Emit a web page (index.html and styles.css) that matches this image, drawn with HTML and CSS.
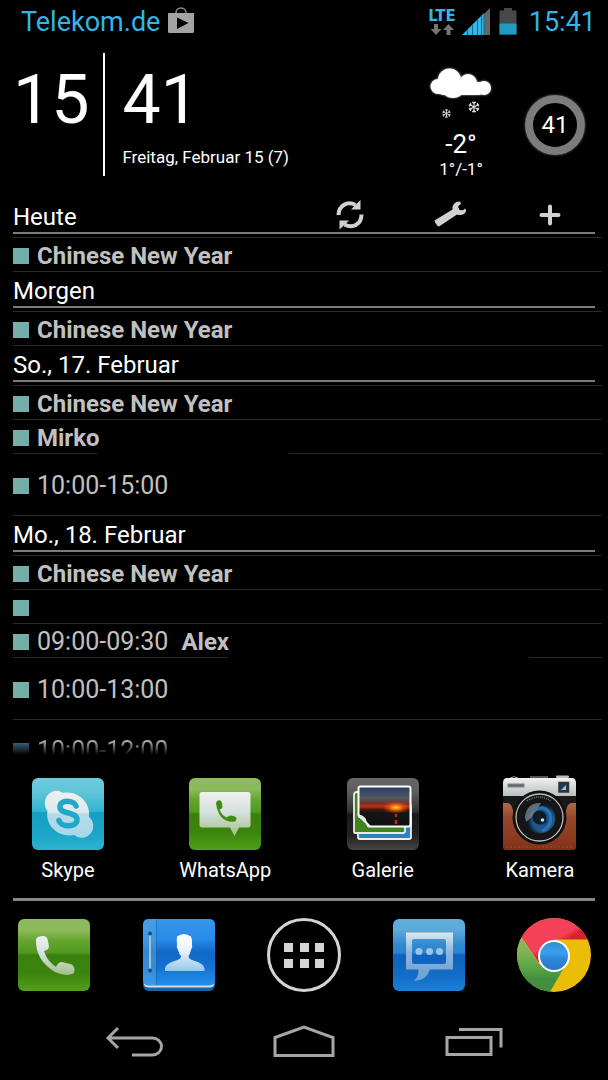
FILE: index.html
```html
<!DOCTYPE html>
<html lang="de">
<head>
<meta charset="utf-8">
<meta name="viewport" content="width=device-width, initial-scale=1">
<title>Startbildschirm</title>
<link rel="stylesheet" href="styles.css">
</head>
<body>
<header class="status">
  <span class="carrier">Telekom.de</span>
  <svg class="store" width="26" height="27" viewBox="0 0 26 27" aria-hidden="true">
    <path d="M8 7V5.500a5 4.500 0 0 1 10 0V7" fill="none" stroke="#8c8c8c" stroke-width="1.500"/>
    <path d="M0 6h26v18.500a1.500 1.500 0 0 1-1.500 1.500h-23A1.500 1.500 0 0 1 0 24.500z" fill="#a3a3a3"/>
    <path d="M9 10.500l11.500 5.500L9 22z" fill="#000"/>
  </svg>
  <span class="network">
    <span class="lte">LTE</span>
    <svg width="24" height="11" viewBox="0 0 24 11" fill="#757575" aria-hidden="true">
      <path d="M4 0h4v5h3.500L6 11 .5 5H4zM16.500 11h4V6H24L18.500 0 13 6h3.500z"/>
    </svg>
  </span>
  <svg class="signal" width="28" height="28" viewBox="0 0 28 28" aria-hidden="true">
    <path d="M22 6L28 0v27h-6z" fill="#666"/>
    <path d="M0 27L22 5v22z" fill="#33b5e5"/>
    <path d="M5.500 22v5M10.500 17v10M15.500 12v15M19.500 8v19M22 5v22" stroke="#17698a" stroke-width="1"/>
  </svg>
  <svg class="battery" width="18" height="27" viewBox="0 0 18 27" aria-hidden="true">
    <path d="M5 0h8v2.500h4.500V26.500H.5V2.500H5z" fill="#484848"/>
    <path d="M.5 15.500h17v11H.5z" fill="#2199c2"/>
  </svg>
  <time class="status-time">15:41</time>
</header>

<main>
<section class="clock" aria-label="Uhr und Wetter">
  <div class="big hours">15</div>
  <div class="minutes">
    <div class="big">41</div>
    <div class="date">Freitag, Februar 15 (7)</div>
  </div>
  <div class="weather">
    <svg width="66" height="58" viewBox="0 0 66 58" aria-hidden="true">
      <defs>
        <filter id="glow" x="-20%" y="-20%" width="140%" height="140%"><feGaussianBlur stdDeviation="1"/></filter>
        <g id="cloud"><circle cx="21.500" cy="15" r="11.500"/><circle cx="40" cy="18" r="9"/><circle cx="10" cy="21.500" r="7.500"/><circle cx="56" cy="23" r="7"/><rect x="10" y="17" width="46" height="13" rx="5"/><ellipse cx="25" cy="26" rx="10" ry="7"/></g>
        <path id="flake" d="M0-5.500V5.500M-4.800-2.800L4.800 2.800M-4.800 2.800L4.800-2.800M-1.800-5L0-3.500 1.800-5M-1.800 5L0 3.500 1.800 5M-5.200-1L-3-1.700-3.600-4M5.200 1L3 1.700 3.600 4M-5.200 1L-3 1.700-3.600 4M5.200-1L3-1.700 3.600-4" fill="none" stroke="#ddd" stroke-width="1.200"/>
      </defs>
      <use href="#cloud" fill="#aaa" filter="url(#glow)"/>
      <use href="#cloud" fill="#fff"/>
      <use href="#flake" transform="translate(18.500 48.500) scale(.78)"/>
      <use href="#flake" transform="translate(46 42)"/>
    </svg>
    <div class="temp">-2°</div>
    <div class="range">1°/-1°</div>
  </div>
  <div class="ring">41</div>
</section>

<section class="agenda" aria-label="Termine">
  <div class="day">
    <div class="day-head">
      <h2>Heute</h2>
      <div class="tools">
        <button type="button" aria-label="Aktualisieren">
          <svg width="30" height="32" viewBox="0 0 30 32" fill="none" stroke="#d0d3cd" stroke-width="4" aria-hidden="true">
            <path d="M3.500 16C3.500 7 12 1.500 20.500 6"/><path d="M26.500 15.500C26.500 25 18 30 9.500 25.500"/>
            <path d="M25.500 1v9.500h-9.500zM4.500 30.500V21.500h9.500z" fill="#d0d3cd" stroke="none"/>
          </svg>
        </button>
        <button type="button" aria-label="Einstellungen">
          <svg width="34" height="30" viewBox="0 0 34 30" aria-hidden="true">
            <path d="M1.500 20.500L19.500 9.500C19 5 22 1.500 27 1.500l1 2.300-3 2.700 1.500 3.500 3.500.2 2-1.700 1.300 2C32 14.500 28 16 24 14.500L6 26.500C4 26 2 23 1.500 20.500z" fill="#d0d3cd"/>
          </svg>
        </button>
        <button type="button" aria-label="Hinzufügen">
          <svg width="24" height="24" viewBox="0 0 24 24" stroke="#d0d3cd" stroke-width="4" stroke-linecap="round" aria-hidden="true"><path d="M12 3.500v17M3.500 12h17"/></svg>
        </button>
      </div>
    </div>
    <ul><li><i class="dot"></i><b>Chinese New Year</b></li></ul>
  </div>
  <div class="day">
    <div class="day-head"><h2>Morgen</h2></div>
    <ul><li><i class="dot"></i><b>Chinese New Year</b></li></ul>
  </div>
  <div class="day">
    <div class="day-head"><h2>So., 17. Februar</h2></div>
    <ul>
      <li><i class="dot"></i><b>Chinese New Year</b></li>
      <li class="gap-early"><i class="dot"></i><b>Mirko</b></li>
      <li class="tall"><i class="dot"></i><span class="when">10:00-15:00</span></li>
    </ul>
  </div>
  <div class="day">
    <div class="day-head"><h2>Mo., 18. Februar</h2></div>
    <ul>
      <li><i class="dot"></i><b>Chinese New Year</b></li>
      <li><i class="dot"></i></li>
      <li class="gap-late"><i class="dot"></i><span class="when">09:00-09:30</span><b class="after-time">Alex</b></li>
      <li class="tall"><i class="dot"></i><span class="when">10:00-13:00</span></li>
      <li class="fading"><i class="dot blue"></i><span class="when">10:00-12:00</span></li>
    </ul>
  </div>
</section>

<nav class="apps" aria-label="Apps">
  <a href="#skype">
    <svg width="74" height="76" viewBox="-1 -3 74 76" aria-hidden="true">
      <defs>
        <linearGradient id="sky" x2="0" y2="1"><stop stop-color="#6bcbdc"/><stop offset=".18" stop-color="#64c5d8"/><stop offset=".47" stop-color="#30b4d0"/><stop offset=".48" stop-color="#169fc2"/><stop offset=".78" stop-color="#1aa6c8"/><stop offset="1" stop-color="#2cb4d0"/></linearGradient>
        <linearGradient id="skyw" x2="0" y2="1"><stop stop-color="#eef0f0"/><stop offset=".45" stop-color="#dce9ed"/><stop offset=".5" stop-color="#b4dbe9"/><stop offset="1" stop-color="#a9d7e8"/></linearGradient>
      </defs>
      <rect width="72" height="72" rx="6" fill="url(#sky)"/>
      <path d="M13 24A11.500 11.500 0 0 1 31 15C45 12 59 24 57 39A11.500 11.500 0 0 1 42 57C27 60 13 48 15.500 33A11 11 0 0 1 13 24z" fill="url(#skyw)"/>
      <path d="M44 28C42 22 28 21 28 29C28 37 45 33 45 41.500C45 50 29 49.500 27 42.500" fill="none" stroke="#20a7c9" stroke-width="5.500" stroke-linecap="round"/>
    </svg>
    <span>Skype</span>
  </a>
  <a href="#whatsapp">
    <svg width="74" height="76" viewBox="-1 -3 74 76" aria-hidden="true">
      <defs>
        <linearGradient id="grn" x2="0" y2="1"><stop stop-color="#8fbb5d"/><stop offset=".16" stop-color="#8cb95a"/><stop offset=".3" stop-color="#65a52f"/><stop offset=".47" stop-color="#51991d"/><stop offset=".5" stop-color="#3a800e"/><stop offset=".75" stop-color="#3b840e"/><stop offset="1" stop-color="#51a11a"/></linearGradient>
        <linearGradient id="grnw" x2="0" y2="1"><stop stop-color="#eef1ec"/><stop offset=".45" stop-color="#d5e0e0"/><stop offset="1" stop-color="#a5bf8a"/></linearGradient>
      </defs>
      <rect width="72" height="72" rx="6" fill="url(#grn)"/>
      <path d="M13 14h46q2.500 0 2.500 2.500v30.500q0 2.500-2.500 2.500H50L45.500 58 41 49.500H13q-2.500 0-2.500-2.500V16.500Q10.500 14 13 14z" fill="url(#grnw)"/>
      <path d="M28 23q4-2 5 2l.5 4q-.5 2-3 2.500 2 6 7.500 8 2-2.500 4-2l4 1q3 2 0 5-16 2-19-18z" fill="#3e8c12"/>
    </svg>
    <span>WhatsApp</span>
  </a>
  <a href="#galerie">
    <svg width="74" height="76" viewBox="-1 -3 74 76" aria-hidden="true">
      <defs>
        <linearGradient id="blk" x2="0" y2="1"><stop stop-color="#686868"/><stop offset=".2" stop-color="#5c5c5c"/><stop offset=".47" stop-color="#333"/><stop offset=".5" stop-color="#191919"/><stop offset=".8" stop-color="#222"/><stop offset="1" stop-color="#454545"/></linearGradient>
        <linearGradient id="dusk" x2="0" y2="1"><stop stop-color="#253e67"/><stop offset=".3" stop-color="#56565d"/><stop offset=".42" stop-color="#6c3430"/><stop offset=".5" stop-color="#c92c0c"/><stop offset=".57" stop-color="#491a10"/><stop offset=".65" stop-color="#161414"/><stop offset="1" stop-color="#111"/></linearGradient>
        <radialGradient id="sun"><stop stop-color="#ffe23c"/><stop offset=".25" stop-color="#ff8a18"/><stop offset="1" stop-color="#ee3300" stop-opacity="0"/></radialGradient>
      </defs>
      <rect width="72" height="72" rx="6" fill="url(#blk)"/>
      <rect x="11" y="26" width="53" height="35" rx="2" fill="#2f83bc" stroke="#eee" stroke-width="1.800"/>
      <path d="M10 14h48v39q0 2-2 2H8q-1 0-1-2V17q0-3 3-3z" fill="#40841f" stroke="#e8eee2" stroke-width="1.800"/>
      <path d="M13.500 8.500h48q2 0 2 2v36q0 2-2 2H23L11.500 37V10.500q0-2 2-2z" fill="url(#dusk)" stroke="#fff" stroke-width="2"/>
      <ellipse cx="49" cy="29.500" rx="14" ry="6.500" fill="url(#sun)"/>
      <path d="M49 36v3M49 42v4" stroke="#c22a12" stroke-width="2.500"/>
      <path d="M11.500 37q7 1 7.500 6.500 1 2.500 4 5l-2 .5Q19 42 11.500 39z" fill="#e4e4e4" stroke="#fff"/>
    </svg>
    <span>Galerie</span>
  </a>
  <a href="#kamera">
    <svg width="74" height="76" viewBox="0 -3 74 76" aria-hidden="true">
      <defs>
        <linearGradient id="met" x2="0" y2="1"><stop stop-color="#f0f1f0"/><stop offset="1" stop-color="#b9bfc0"/></linearGradient>
        <linearGradient id="lea" x2="0" y2="1"><stop stop-color="#b06a4c"/><stop offset=".3" stop-color="#98482a"/><stop offset="1" stop-color="#813216"/></linearGradient>
        <radialGradient id="lens" cx=".62" cy=".6"><stop stop-color="#061325"/><stop offset=".3" stop-color="#18538f"/><stop offset=".65" stop-color="#22598f"/><stop offset="1" stop-color="#10161d"/></radialGradient>
      </defs>
      <path d="M7 0q4-2.500 8 0M27-1h18" fill="none" stroke="#aaa"/><rect x="53" y="-2.500" width="13" height="2.500" rx="1" fill="#bbb"/>
      <rect width="73" height="72" rx="4" fill="#181818"/>
      <path d="M0 25h5q4 1 5 8 5 30 26.500 32T63 33q1-7 5-8h5v44q0 3-3 3H3q-3 0-3-3z" fill="url(#lea)"/>
      <path d="M3 0h67q3 1 3 5v13H0V5Q0 1 3 0z" fill="url(#met)"/>
      <rect x="5" y="6" width="16" height="3" fill="#666" stroke="#888"/>
      <rect x="56" y="4.500" width="9.500" height="9.500" fill="#203850" stroke="#333" stroke-width="1.500"/><path d="M58 12l5-5v5z" fill="#9dc2dc"/>
      <circle cx="36.500" cy="39.500" r="27" fill="#101010"/>
      <circle cx="36.500" cy="39.500" r="23.500" fill="#151515" stroke="#bbb" stroke-width="1.300"/>
      <path d="M24 23q12-8 24 0" fill="none" stroke="#777" stroke-width="1.500" stroke-dasharray="1 1"/>
      <circle cx="36.500" cy="39.500" r="16" fill="url(#lens)"/>
      <path d="M22 39Q24 24 38 25L30 38l-7 6z" fill="#9ca6ae" opacity=".6"/>
      <path d="M31 33q10-8 16 3 3 12-8 17" fill="none" stroke="#2c7cc2" stroke-width="3" opacity=".8"/>
      <circle cx="36.500" cy="39.500" r="7" fill="#111c28"/><circle cx="39.500" cy="42" r="1.800" fill="#bde4ff"/>
      <path d="M3 69h67" stroke="#c48867" stroke-dasharray="2 2" opacity=".3"/>
    </svg>
    <span>Kamera</span>
  </a>
</nav>

<nav class="dock" aria-label="Dock">
  <a href="#telefon" aria-label="Telefon">
    <svg width="74" height="74" viewBox="-1 -1 74 74" aria-hidden="true">
      <rect width="72" height="72" rx="6" fill="url(#grn)"/>
      <path d="M20 18Q28 15 29.500 20L31 27q0 4-5 5Q29 42 38 48 40 43 44 43L54 45.500Q58 49 55.500 54.500 48 58 37 53 17 41 18 20z" fill="url(#grnw)"/>
    </svg>
  </a>
  <a href="#kontakte" aria-label="Kontakte">
    <svg width="74" height="74" viewBox="-1 -1 74 74" aria-hidden="true">
      <defs>
        <linearGradient id="blu" x2="0" y2="1"><stop stop-color="#3595ea"/><stop offset=".3" stop-color="#298bea"/><stop offset=".5" stop-color="#1168c8"/><stop offset=".7" stop-color="#146fd0"/><stop offset="1" stop-color="#218fec"/></linearGradient>
        <linearGradient id="man" x2="0" y2="1"><stop stop-color="#fff"/><stop offset=".45" stop-color="#e8f2fa"/><stop offset="1" stop-color="#96c9e8"/></linearGradient>
      </defs>
      <rect width="72" height="72" rx="6" fill="#1a64a4"/>
      <path d="M1 62v4q1 2.500 5 2.500h60q4 0 5-2.500v-4z" fill="#d8dcdf"/>
      <path d="M6 0h60q6 0 6 6v56q-1 4.500-6 4.500H6Q1 66.500 0 62V6q0-6 6-6z" fill="url(#blu)"/>
      <path d="M6 0h7v66H6Q1 66 0 62V6q0-6 6-6z" fill="#54a8de" opacity=".5"/>
      <path d="M7 15v36" stroke="#a4bfd2" stroke-width="2"/><circle cx="7" cy="14.500" r="2" fill="#1b4b73"/><circle cx="7" cy="51.500" r="2" fill="#1b4b73"/>
      <path d="M13.500 1v65" stroke="#1566aa" opacity=".6"/>
      <path d="M34 17.500q7-5 14 0 1.500 3 1 8.500 1 2-1 5-1 4-2.500 6 0 3 5 4.500 11 3.500 11 8v2.500H22V49.500q0-4.500 11-8 5-1.500 5-4.500-2-2-3-6-2-3-1-5-.5-5.500 0-8.500z" fill="url(#man)"/>
    </svg>
  </a>
  <a href="#apps" aria-label="Alle Apps">
    <svg width="74" height="74" viewBox="0 0 74 74" aria-hidden="true">
      <circle cx="37" cy="37" r="35.500" fill="none" stroke="#d3d5d0" stroke-width="3"/>
      <path d="M17 25h9v9h-9zM33 25h9v9h-9zM48 25h9v9h-9zM17 41h9v9h-9zM33 41h9v9h-9zM48 41h9v9h-9z" fill="#d3d5d0"/>
    </svg>
  </a>
  <a href="#sms" aria-label="Nachrichten">
    <svg width="74" height="74" viewBox="-1 -1 74 74" aria-hidden="true">
      <defs>
        <linearGradient id="sms" x2="0" y2="1"><stop stop-color="#5faede"/><stop offset=".15" stop-color="#5daadc"/><stop offset=".35" stop-color="#328ad2"/><stop offset=".47" stop-color="#2b83cf"/><stop offset=".5" stop-color="#0d63bd"/><stop offset=".75" stop-color="#126bc5"/><stop offset="1" stop-color="#1a7fd7"/></linearGradient>
        <linearGradient id="smsw" x2="0" y2="1"><stop stop-color="#dde7ea"/><stop offset=".4" stop-color="#8db7de"/><stop offset="1" stop-color="#6b9ed0"/></linearGradient>
      </defs>
      <rect width="72" height="72" rx="6" fill="url(#sms)"/>
      <path fill-rule="evenodd" d="M13 13.500h47v37H37Q33 62 21 62q5-5 4.500-11.500H13zM21 20q-2 0-2 2v21q0 2 2 2h30q2 0 2-2V22q0-2-2-2z" fill="url(#smsw)"/>
      <g fill="#9cc4e8"><circle cx="26" cy="32.500" r="3.500"/><circle cx="36.500" cy="32.500" r="3.500"/><circle cx="46.500" cy="32.500" r="3.500"/></g>
    </svg>
  </a>
  <a href="#chrome" aria-label="Chrome">
    <svg width="74" height="74" viewBox="0 0 74 74" aria-hidden="true">
      <defs>
        <clipPath id="disc"><circle cx="37" cy="37" r="37"/></clipPath>
        <linearGradient id="red" x2="1" y2="1"><stop offset=".5" stop-color="#f5405a"/><stop offset=".58" stop-color="#dc1f2c"/></linearGradient>
        <linearGradient id="leaf" x2="0" y2="1"><stop offset=".2" stop-color="#86b65a"/><stop offset=".6" stop-color="#55a043"/><stop offset=".75" stop-color="#438f3e"/></linearGradient>
        <linearGradient id="core" x2="0" y2="1"><stop stop-color="#2f8fd0"/><stop offset=".4" stop-color="#3f9df0"/><stop offset=".6" stop-color="#2c86dc"/><stop offset="1" stop-color="#2b78c4"/></linearGradient>
      </defs>
      <g clip-path="url(#disc)">
        <rect width="74" height="74" fill="#eabd06"/>
        <path d="M5 20L0 0H74V21.500H37L22 45z" fill="url(#red)"/>
        <path d="M5 20L22 46 49 46 33 74H0V20z" fill="url(#leaf)"/>
      </g>
      <circle cx="37" cy="38" r="16" fill="#fff"/><circle cx="37" cy="38" r="14" fill="url(#core)"/>
    </svg>
  </a>
</nav>
</main>

<footer class="navbar">
  <button type="button" aria-label="Zurück">
    <svg width="60" height="36" viewBox="0 0 60 36" fill="none" stroke="#a6a6a6" stroke-width="3" aria-hidden="true"><path d="M14 3L4 13l10 10M4 13h44.500a9 8.500 0 0 1 0 17H28"/></svg>
  </button>
  <button type="button" aria-label="Startseite">
    <svg width="64" height="36" viewBox="0 0 64 36" fill="none" stroke="#a6a6a6" stroke-width="3" aria-hidden="true"><path d="M3 12.500L32 2l29 10.500V30.500H3z"/></svg>
  </button>
  <button type="button" aria-label="Letzte Apps">
    <svg width="60" height="36" viewBox="0 0 60 36" fill="none" stroke="#a6a6a6" stroke-width="3" aria-hidden="true"><path d="M3 12.500h44v17H3zM15 4.500h42V22.500"/></svg>
  </button>
</footer>
</body>
</html>
```
FILE: styles.css
```css
* {
  box-sizing: border-box;
}

body {
  margin: 0;
  min-height: 100vh;
  display: flex;
  flex-direction: column;
  background: #000;
  color: #fff;
  font-family: Roboto, "Noto Sans", sans-serif;
}

a {
  color: inherit;
  text-decoration: none;
}

button {
  display: flex;
  align-items: center;
  justify-content: center;
  padding: 0;
  border: 0;
  background: none;
}

svg {
  display: block;
  flex: none;
}

/* Status bar */
.status {
  display: flex;
  align-items: center;
  height: 44px;
  padding: 0 12px 0 21px;
  color: #33b5e5;
  font-size: 27px;
}

.store {
  margin: 0 auto 4px 8px;
}

.network {
  display: flex;
  flex-direction: column;
  align-items: center;
  gap: 2px;
}

.lte {
  font: bold 15px/12px "DejaVu Sans", sans-serif;
}

.signal {
  margin: 0 9px 0 6px;
}

.battery {
  margin-bottom: 2px;
}

.status-time {
  margin-left: 12px;
}

/* Clock and weather */
.clock {
  display: flex;
  height: 154px;
  padding: 9px 23px 22px 13px;
}

.big {
  font-size: 68px;
  line-height: 94px;
}

.hours {
  padding-right: 14px;
  border-right: 2px solid #fff;
}

.minutes {
  margin: 0 auto 0 17px;
}

.date {
  font-size: 17px;
  line-height: 20px;
}

.weather {
  display: flex;
  flex-direction: column;
  align-items: center;
  padding-top: 12px;
}

.temp {
  padding-top: 7px;
  font-size: 26px;
  line-height: 28px;
}

.range {
  font-size: 17px;
  line-height: 22px;
}

.ring {
  display: grid;
  place-items: center;
  width: 60px;
  height: 60px;
  margin: 42px 0 0 31px;
  border: 8px solid #7c7c7c;
  border-radius: 50%;
  box-shadow: 0 0 3px #555;
  font-size: 24px;
}

/* Agenda */
.agenda {
  padding-left: 13px;
  font-size: 24px;
  color: #c0c0c0;
}

.day-head {
  display: flex;
  align-items: center;
  justify-content: space-between;
  height: 36px;
  margin: 0 13px 3px 0;
  border-bottom: 2px solid #7b7b7b;
  color: #fff;
}

.day-head h2 {
  margin: 0;
  padding-top: 4px;
  font-size: 24px;
  font-weight: 400;
  line-height: 30px;
}

.tools {
  display: flex;
  gap: 40px;
  padding-right: 15px;
}

.tools button {
  width: 60px;
}

.agenda ul {
  margin: 0 6px 0 0;
  padding: 0;
  border-top: 1px solid #292929;
  list-style: none;
}

.agenda li {
  display: flex;
  align-items: center;
  gap: 8px;
  height: 34px;
  padding-top: 2px;
  border-bottom: 1px solid #292929;
}

.agenda .tall {
  height: 62px;
}

.agenda .gap-early {
  border-image: linear-gradient(90deg, #292929 85px, transparent 85px 276px, #292929 276px) 1;
}

.agenda .gap-late {
  border-image: linear-gradient(90deg, #292929 215px, transparent 215px 515px, #292929 515px) 1;
}

.agenda .fading {
  height: 35px;
  padding-top: 16px;
  align-items: flex-start;
  overflow: hidden;
  border: 0;
  -webkit-mask-image: linear-gradient(#000 55%, transparent);
  mask-image: linear-gradient(#000 55%, transparent);
}

.dot {
  flex: none;
  width: 16px;
  height: 16px;
  background: #74aeaa;
}

.blue {
  margin-top: 7px;
  background: #4a7a9c;
}

.when {
  font-size: 25px;
}

.after-time {
  margin-left: 5px;
}

/* App shortcuts */
.apps {
  display: flex;
  justify-content: space-between;
  padding: 20px 21px 0;
  font-size: 20px;
}

.apps a {
  display: flex;
  flex-direction: column;
  align-items: center;
  gap: 6px;
  width: 94px;
  line-height: 26px;
}

.dock {
  display: flex;
  justify-content: space-between;
  margin: 15px 13px 0;
  padding: 17px 4px 0;
  border-top: 3px solid #868686;
}

.navbar {
  display: flex;
  justify-content: space-between;
  margin-top: auto;
  padding: 0 104px 19px;
}
```
